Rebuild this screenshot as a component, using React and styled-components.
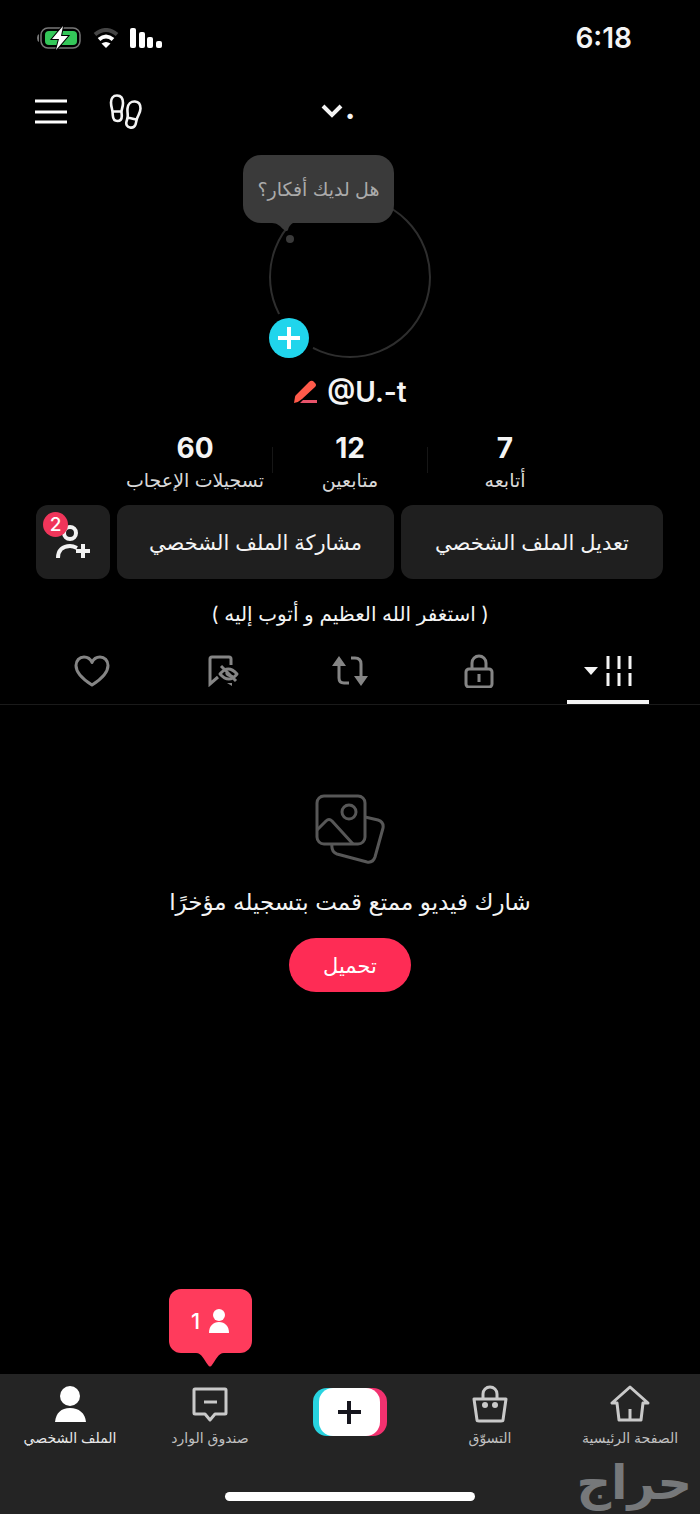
import React from "react";
import styled, {createGlobalStyle} from "styled-components";

const stats = [
  {value: 7, label: "أتابعه"},
  {value: 12, label: "متابعين"},
  {value: 60, label: "تسجيلات الإعجاب"},
];

export default function App() {
  return (
    <>
      <GlobalStyle />
      <Page dir="rtl" lang="ar">
        <StatusBar>
          <Time>6:18</Time>
          <StatusIcons dir="ltr">
            <BatteryIcon />
            <WifiIcon />
            <SignalIcon />
          </StatusIcons>
        </StatusBar>

        <Header>
          <span />
          <AccountButton aria-label="الحسابات">
            <span>.</span>
            <svg width="22" height="15" viewBox="0 0 22 15" fill="none">
              <path d="M2 2l9 9 9-9" stroke="#f4f4f4" strokeWidth="4" />
            </svg>
          </AccountButton>
          <HeaderActions>
            <IconButton aria-label="الزيارات">
              <FootprintsIcon />
            </IconButton>
            <IconButton aria-label="القائمة">
              <svg width="34" height="26" viewBox="0 0 34 26">
                <path
                  d="M1 3h32M1 14h32M1 24h32"
                  stroke="#fff"
                  strokeWidth="3"
                />
              </svg>
            </IconButton>
          </HeaderActions>
        </Header>

        <Main>
          <AvatarArea>
            <Ring />
            <ThoughtBubble>
              هل لديك أفكار؟
              <ThoughtTail width="26" height="24" viewBox="0 0 26 24">
                <path
                  d="M2 0c5 0 8 3 11 6 2 2 4 3 5 1 1-4 2-6 5-7z"
                  fill="#3a3a3a"
                />
                <circle cx="20" cy="16" r="4" fill="#3a3a3a" />
              </ThoughtTail>
            </ThoughtBubble>
            <AddButton aria-label="إضافة">
              <svg width="22" height="22" viewBox="0 0 22 22">
                <path d="M11 0v22M0 11h22" stroke="#fff" strokeWidth="4" />
              </svg>
            </AddButton>
          </AvatarArea>

          <NameRow>
            <bdi dir="ltr">@U.-t</bdi>
            <svg width="25" height="24" viewBox="0 0 25 24">
              <path
                d="M1 23l1-6q0-1 1-2L16 2q2-2 4-1l2 2q2 2 0 4L9 19q-3 3-8 4z"
                fill="#ff5a4a"
              />
              <path d="M10 20h14v3H7z" fill="#e8536a" />
            </svg>
          </NameRow>

          <Stats>
            {stats.map((stat) => (
              <Stat key={stat.label}>
                <strong>{stat.value}</strong>
                <span>{stat.label}</span>
              </Stat>
            ))}
          </Stats>

          <Actions>
            <ActionButton>تعديل الملف الشخصي</ActionButton>
            <ActionButton>مشاركة الملف الشخصي</ActionButton>
            <ActionButton aria-label="إضافة أصدقاء">
              <svg width="36" height="34" viewBox="0 0 36 34" fill="none">
                <g stroke="#f2f2f2" strokeWidth="4">
                  <circle cx="15" cy="8" r="6" />
                  <path d="M3 33c0-8 5-12 12-12 3 0 5 1 7 2" />
                  <path d="M28 19v14M21 26h14" />
                </g>
              </svg>
              <Badge>2</Badge>
            </ActionButton>
          </Actions>

          <Bio>( استغفر الله العظيم و أتوب إليه )</Bio>

          <Tabs>
            <Tab $active aria-label="المنشورات">
              <svg width="26" height="30" viewBox="0 0 26 30">
                <path
                  d="M2 0v13M13 0v13M24 0v13M2 17v13M13 17v13M24 17v13"
                  stroke="#f4f4f4"
                  strokeWidth="3"
                />
              </svg>
              <svg width="14" height="8" viewBox="0 0 14 8">
                <path d="M0 0h14L7 8z" fill="#f4f4f4" />
              </svg>
            </Tab>
            <Tab aria-label="الخاصة">
              <svg width="30" height="34" viewBox="0 0 30 34" fill="none">
                <g stroke="#858585" strokeWidth="3">
                  <rect x="2" y="15" width="26" height="18" rx="3" />
                  <path d="M8 15V9a7 7 0 0 1 14 0v6M15 20v8" />
                </g>
              </svg>
            </Tab>
            <Tab aria-label="إعادة النشر">
              <svg width="38" height="32" viewBox="0 0 38 32" fill="none">
                <path
                  d="M8 8v15q0 5 5 5h5M20 3h4q6 0 6 6v14"
                  stroke="#858585"
                  strokeWidth="3"
                />
                <path d="M8 1l7 10H1zM30 31l-7-10h14z" fill="#858585" />
              </svg>
            </Tab>
            <Tab aria-label="المحفوظات">
              <BookmarkHiddenIcon />
            </Tab>
            <Tab aria-label="الإعجابات">
              <svg width="36" height="32" viewBox="0 0 36 32" fill="none">
                <path
                  d="M18 30C10 25 2 18 2 10.500C2 5.500 5.500 2 10 2c3.500 0 6.500 2 8 5.500C19.500 4 22.500 2 26 2c4.500 0 8 3.500 8 8.500C34 18 26 25 18 30z"
                  stroke="#858585"
                  strokeWidth="3"
                  strokeLinejoin="round"
                />
              </svg>
            </Tab>
          </Tabs>

          <Empty>
            <PhotosIcon />
            <p>شارك فيديو ممتع قمت بتسجيله مؤخرًا</p>
            <UploadButton>تحميل</UploadButton>
          </Empty>
        </Main>

        <BottomBar>
          <Nav>
            <NavLink href="#home">
              <svg width="40" height="38" viewBox="0 0 40 38" fill="none">
                <path
                  d="M20 2L2 18h5l2 17h22l2-17h5zM20 24v11"
                  stroke="#c9c9c9"
                  strokeWidth="3"
                  strokeLinejoin="round"
                />
              </svg>
              الصفحة الرئيسية
            </NavLink>
            <NavLink href="#shop">
              <svg width="40" height="38" viewBox="0 0 40 38" fill="none">
                <path
                  d="M4 14h32l-3 21q0 1-2 1H9q-2 0-2-1zM13 14V9a7 7 0 0 1 14 0v5"
                  stroke="#c9c9c9"
                  strokeWidth="3"
                  strokeLinejoin="round"
                />
                <circle cx="15" cy="20" r="3" fill="#c9c9c9" />
                <circle cx="25" cy="20" r="3" fill="#c9c9c9" />
              </svg>
              التسوّق
            </NavLink>
            <CreateButton aria-label="إنشاء">
              <svg width="74" height="48" viewBox="0 0 74 48">
                <rect width="50" height="48" rx="14" fill="#28d3e0" />
                <rect x="24" width="50" height="48" rx="14" fill="#f2316f" />
                <rect x="6" width="61" height="48" rx="14" fill="#fff" />
                <path d="M36 13v23M25 24h23" stroke="#16161e" strokeWidth="4" />
              </svg>
            </CreateButton>
            <NavLink href="#inbox">
              <svg width="40" height="38" viewBox="0 0 40 38" fill="none">
                <path
                  d="M5 4h30q1 0 1 1v23q0 1-1 1H25l-5 6-5-6H5q-1 0-1-1V5q0-1 1-1z"
                  stroke="#c9c9c9"
                  strokeWidth="3"
                  strokeLinejoin="round"
                />
                <path d="M14 17h13" stroke="#c9c9c9" strokeWidth="3" />
              </svg>
              صندوق الوارد
              <Notice>
                <svg width="20" height="24" viewBox="0 0 20 24" fill="#fff">
                  <circle cx="10" cy="6" r="6" />
                  <path d="M0 24c0-7 4-11 10-11s10 4 10 11z" />
                </svg>
                <span>1</span>
                <NoticeTail width="28" height="14" viewBox="0 0 28 14">
                  <path
                    d="M0 0c6 0 8 7 12 12q2 3 4 0c4-5 6-12 12-12z"
                    fill="#ff3b5c"
                  />
                </NoticeTail>
              </Notice>
            </NavLink>
            <NavLink href="#profile" $active>
              <svg width="40" height="38" viewBox="0 0 40 38" fill="#fff">
                <circle cx="20" cy="11" r="10" />
                <path d="M5 37c1-9 6-14 15-14s15 5 16 14z" />
              </svg>
              الملف الشخصي
            </NavLink>
          </Nav>
          <HomeIndicator />
          <Watermark>حراج</Watermark>
        </BottomBar>
      </Page>
    </>
  );
}

function BatteryIcon() {
  return (
    <svg width="45" height="24" viewBox="0 0 45 24">
      <path d="M2 8q-2 1-2 4t2 4z" fill="#777" />
      <rect
        x="4"
        y="2"
        width="39"
        height="20"
        rx="7"
        fill="none"
        stroke="#777"
        strokeWidth="1.500"
      />
      <rect x="8" y="5" width="32" height="14" rx="4" fill="#34c759" />
      <path
        d="M26 0L15 13h7l-3 11 12-14h-7z"
        fill="#fff"
        stroke="#000"
        strokeWidth="2"
        paintOrder="stroke"
      />
    </svg>
  );
}

function WifiIcon() {
  return (
    <svg width="26" height="20" viewBox="0 0 26 20" fill="none">
      <path d="M2 6.500q11-9 22 0" stroke="#444" strokeWidth="4" />
      <path d="M6 11.500q7-6 14 0" stroke="#fff" strokeWidth="4" />
      <path d="M13 20l-4.500-4.500q4.500-3 9 0z" fill="#fff" />
    </svg>
  );
}

function SignalIcon() {
  return (
    <svg width="32" height="20" viewBox="0 0 32 20" fill="#fff">
      <rect width="6" height="20" rx="2" />
      <rect x="9" y="4" width="6" height="16" rx="2" />
      <rect x="17" y="9" width="6" height="11" rx="2" />
      <rect x="26" y="13" width="6" height="7" rx="2" />
    </svg>
  );
}

function FootprintsIcon() {
  return (
    <svg width="34" height="36" viewBox="0 0 34 36" fill="none">
      <g stroke="#f4f4f4" strokeWidth="2.600" strokeLinejoin="round">
        <path d="M8 2.500c4 0 6 3 6 7.500 0 4-1.500 6-1.500 9 0 1.500.3 2.500.3 4 0 3-1.500 5-4.300 5S4 26 3.800 22.500C3.700 20 3.500 18 3 16c-.7-2.500-1-4-1-6.500 0-4 2-7 6-7zM3.500 18.500h9" />
        <path d="M26 8.500c3.500.3 5.500 3 5.500 7 0 4-2.500 7-3.500 10-.7 2-.8 4-1.500 6-1 2.500-3 3.500-5.500 3-3-.6-4.300-3-3.500-6 .5-2 1-3 1.200-5 .2-3-.5-5-.2-8 .4-4.500 3.500-7.300 7.500-7zM18.500 24.500l8.500 2" />
      </g>
    </svg>
  );
}

function BookmarkHiddenIcon() {
  return (
    <svg width="36" height="32" viewBox="-5 0 36 32" fill="none">
      <g stroke="#858585" strokeWidth="3">
        <path d="M23 10V4q0-2-2-2H4Q2 2 2 4v25l8-7" />
        <path
          d="M12 19q8-10 17 0-8 10-17 0z"
          strokeLinejoin="round"
        />
        <path d="M13 11l15 15" />
        <path d="M18 18q2 4 7 3" strokeWidth="2" />
      </g>
      <path d="M19 28h5v3z" fill="#858585" />
    </svg>
  );
}

function PhotosIcon() {
  return (
    <svg width="70" height="72" viewBox="0 0 70 72" fill="none">
      <g stroke="#575757" strokeWidth="3" strokeLinejoin="round">
        <rect x="2" y="2" width="48" height="48" rx="7" />
        <circle cx="34" cy="18" r="7" />
        <path d="M2 36l9-9q3-3 6 0l21 23" />
        <path d="M50 23l13 3q6 2 5 8l-8 29q-2 6-8 5l-30-8q-6-2-5-10" />
      </g>
    </svg>
  );
}

const GlobalStyle = createGlobalStyle`
  * {
    box-sizing: border-box;
  }
  body {
    margin: 0;
    background: #000;
    font-family: Inter, "DejaVu Sans", sans-serif;
  }
  button {
    border: none;
    padding: 0;
    background: none;
    color: inherit;
    font: inherit;
    cursor: pointer;
  }
  svg {
    display: block;
    flex: none;
  }
`;

const Page = styled.div`
  display: flex;
  flex-direction: column;
  min-height: 100vh;
  color: #f4f4f4;
`;

const StatusBar = styled.div`
  display: flex;
  align-items: center;
  justify-content: space-between;
  height: 76px;
  padding: 0 68px 0 37px;
`;

const Time = styled.time`
  font-size: 28px;
  font-weight: 600;
`;

const StatusIcons = styled.div`
  display: flex;
  align-items: center;
  gap: 11px;
`;

const Header = styled.header`
  display: grid;
  grid-template-columns: 1fr auto 1fr;
  align-items: center;
  height: 70px;
  padding: 0 34px;
`;

const HeaderActions = styled.div`
  display: flex;
  align-items: center;
  justify-content: flex-end;
  gap: 41px;
`;

const IconButton = styled.button`
  display: flex;
`;

const AccountButton = styled.button`
  display: flex;
  align-items: baseline;
  gap: 2px;
  padding: 0 24px 4px 0;
  font-size: 32px;
  font-weight: 700;
  line-height: 18px;
`;

const Main = styled.main`
  flex: 1;
  display: flex;
  flex-direction: column;
  align-items: center;
`;

const AvatarArea = styled.div`
  position: relative;
  width: 162px;
  margin-top: 50px;
`;

const Ring = styled.div`
  height: 162px;
  border: 2px solid #2e2e2e;
  border-radius: 50%;
`;

const ThoughtBubble = styled.div`
  position: absolute;
  top: -41px;
  left: -26px;
  display: flex;
  align-items: center;
  justify-content: center;
  width: 151px;
  height: 68px;
  border-radius: 18px;
  background: #3a3a3a;
  color: #ababab;
  font-size: 19px;
  white-space: nowrap;
`;

const ThoughtTail = styled.svg`
  position: absolute;
  top: 100%;
  left: 27px;
`;

const AddButton = styled.button`
  position: absolute;
  bottom: 0;
  left: 0;
  display: flex;
  align-items: center;
  justify-content: center;
  width: 40px;
  height: 40px;
  border-radius: 50%;
  background: #20d5ec;
  box-shadow: 0 0 0 6px #000;
`;

const NameRow = styled.div`
  display: flex;
  align-items: center;
  gap: 9px;
  margin-top: 17px;
  font-size: 28px;
  font-weight: 600;
  line-height: 34px;
`;

const Stats = styled.div`
  display: grid;
  grid-template-columns: repeat(3, 155px);
  margin-top: 22px;
`;

const Stat = styled.div`
  position: relative;
  display: flex;
  flex-direction: column;
  align-items: center;
  gap: 4px;
  white-space: nowrap;

  strong {
    font-size: 28px;
    font-weight: 700;
    line-height: 34px;
  }
  span {
    font-size: 19px;
    line-height: 24px;
    color: #d8d8d8;
  }
  & + &::before {
    content: "";
    position: absolute;
    top: 16px;
    right: 0;
    width: 1px;
    height: 26px;
    background: #161616;
  }
`;

const Actions = styled.div`
  display: grid;
  grid-template-columns: 262fr 277fr 74px;
  gap: 7px;
  width: 100%;
  padding: 0 37px 0 36px;
  margin-top: 12px;
`;

const ActionButton = styled.button`
  position: relative;
  display: flex;
  align-items: center;
  justify-content: center;
  height: 74px;
  border-radius: 12px;
  background: #1f1f1f;
  font-size: 21px;
`;

const Badge = styled.span`
  position: absolute;
  top: 7px;
  left: 7px;
  width: 25px;
  height: 25px;
  border-radius: 50%;
  background: #f0355a;
  color: #fff;
  font-size: 19px;
  font-weight: 500;
  line-height: 25px;
  text-align: center;
`;

const Bio = styled.p`
  margin: 21px 0 0;
  font-size: 20px;
  line-height: 28px;
`;

const Tabs = styled.div`
  display: grid;
  grid-template-columns: repeat(5, 1fr);
  width: 100%;
  margin-top: 8px;
  padding: 0 27px;
  border-bottom: 1px solid #1a1a1a;
`;

const Tab = styled.button`
  justify-self: center;
  display: flex;
  align-items: center;
  justify-content: center;
  gap: 8px;
  width: 82px;
  height: 68px;
  padding-top: 6px;
  border-bottom: 4px solid ${(props) => (props.$active ? "#f4f4f4" : "transparent")};
`;

const Empty = styled.section`
  display: flex;
  flex-direction: column;
  align-items: center;
  padding: 89px 24px 40px;

  p {
    margin: 20px 0;
    font-size: 23px;
    line-height: 32px;
  }
`;

const UploadButton = styled.button`
  width: 122px;
  height: 54px;
  border-radius: 27px;
  background: #fe2c55;
  color: #fff;
  font-size: 21px;
`;

const BottomBar = styled.footer`
  position: relative;
  display: flex;
  flex-direction: column;
  align-items: center;
  height: 140px;
  background: #242424;
`;

const Nav = styled.nav`
  display: grid;
  grid-template-columns: repeat(5, 1fr);
  width: 100%;
  padding-top: 11px;
`;

const NavLink = styled.a`
  position: relative;
  display: flex;
  flex-direction: column;
  align-items: center;
  gap: 4px;
  color: ${(props) => (props.$active ? "#e8e8e8" : "#c0c0c0")};
  font-size: 14px;
  line-height: 22px;
  text-decoration: none;
  white-space: nowrap;
`;

const CreateButton = styled.button`
  display: flex;
  align-items: flex-start;
  justify-content: center;
  padding-top: 3px;
`;

const Notice = styled.div`
  position: absolute;
  bottom: 96px;
  display: flex;
  align-items: center;
  justify-content: center;
  gap: 9px;
  width: 83px;
  height: 64px;
  border-radius: 12px;
  background: #ff3b5c;
  color: #fff;
  font-size: 22px;
  font-weight: 500;
`;

const NoticeTail = styled.svg`
  position: absolute;
  top: 100%;
`;

const HomeIndicator = styled.div`
  width: 250px;
  height: 9px;
  margin-top: auto;
  margin-bottom: 13px;
  border-radius: 5px;
  background: #fff;
`;

const Watermark = styled.span`
  position: absolute;
  right: 8px;
  bottom: 8px;
  color: #76787a;
  font-size: 48px;
  font-weight: 700;
  line-height: 48px;
`;
